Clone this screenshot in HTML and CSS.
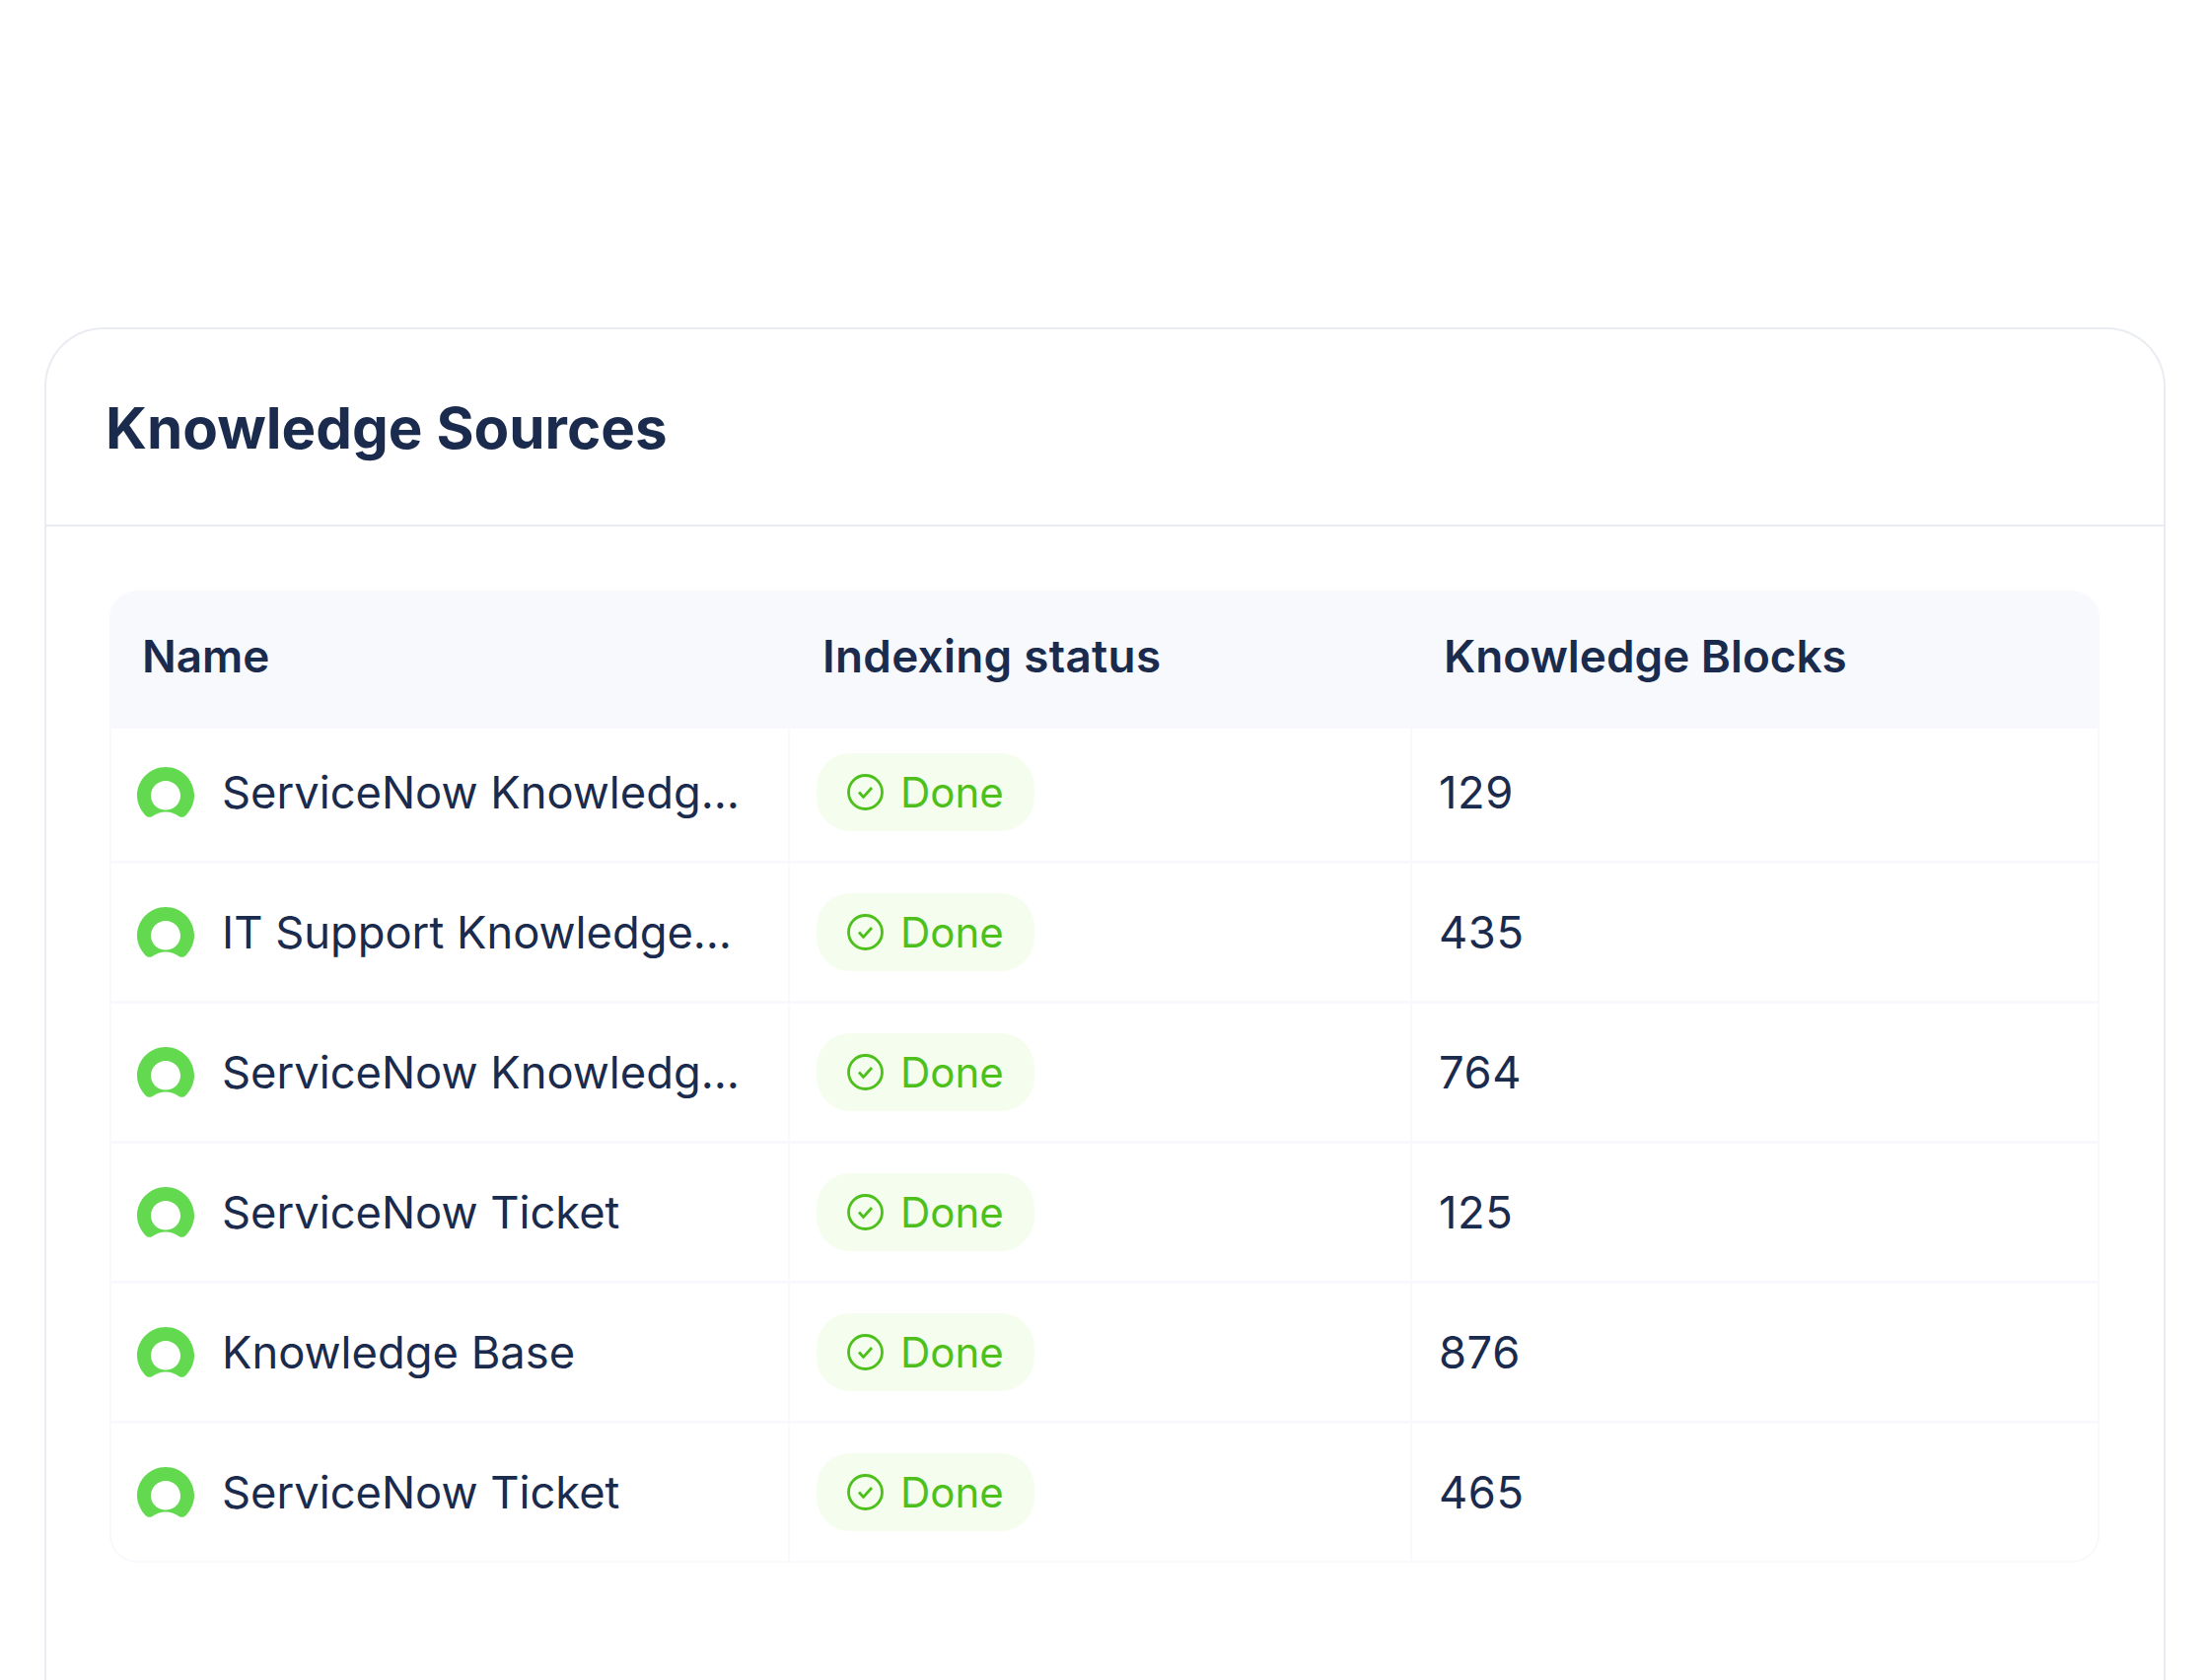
FILE: index.html
```html
<!DOCTYPE html>
<html lang="en">
<head>
<meta charset="utf-8">
<title>Knowledge Sources</title>
<link rel="stylesheet" href="styles.css">
</head>
<body>
<svg class="defs" width="0" height="0" aria-hidden="true">
  <symbol id="logo" viewBox="0 0 58 52">
    <path fill="#62d94f" fill-rule="evenodd" d="M29 0C13 0 0 13 0 29C0 36 3 43 8 48.5C10 51 13 51.5 15.5 50C19 47.5 24 45.5 29 45.5C34 45.5 39 47.5 42.5 50C45 51.5 48 51 50 48.5C55 43 58 36 58 29C58 13 45 0 29 0ZM29 14C37 14 44 20.5 44 29C44 37.5 37 43.5 29 43.5C21 43.5 14 37.5 14 29C14 20.5 21 14 29 14Z"/>
  </symbol>
  <symbol id="check" viewBox="0 0 37 37">
    <circle cx="18.5" cy="18.5" r="17" fill="none" stroke="#4dc01c" stroke-width="2.8"/>
    <path d="M12 18.5L16.5 23.5L25 14" fill="none" stroke="#4dc01c" stroke-width="2.8"/>
  </symbol>
</svg>
<main class="card">
  <h1 class="title">Knowledge Sources</h1>
  <div class="content">
    <div class="table">
      <div class="row head">
        <div class="cell">Name</div>
        <div class="cell">Indexing status</div>
        <div class="cell">Knowledge Blocks</div>
      </div>
      <div class="row">
        <div class="cell name"><svg class="logo"><use href="#logo"/></svg><span class="label">ServiceNow Knowledge Base</span></div>
        <div class="cell status"><span class="pill"><svg class="check"><use href="#check"/></svg>Done</span></div>
        <div class="cell num">129</div>
      </div>
      <div class="row">
        <div class="cell name"><svg class="logo"><use href="#logo"/></svg><span class="label">IT Support Knowledge Base</span></div>
        <div class="cell status"><span class="pill"><svg class="check"><use href="#check"/></svg>Done</span></div>
        <div class="cell num">435</div>
      </div>
      <div class="row">
        <div class="cell name"><svg class="logo"><use href="#logo"/></svg><span class="label">ServiceNow Knowledge Base</span></div>
        <div class="cell status"><span class="pill"><svg class="check"><use href="#check"/></svg>Done</span></div>
        <div class="cell num">764</div>
      </div>
      <div class="row">
        <div class="cell name"><svg class="logo"><use href="#logo"/></svg><span class="label">ServiceNow Ticket</span></div>
        <div class="cell status"><span class="pill"><svg class="check"><use href="#check"/></svg>Done</span></div>
        <div class="cell num">125</div>
      </div>
      <div class="row">
        <div class="cell name"><svg class="logo"><use href="#logo"/></svg><span class="label">Knowledge Base</span></div>
        <div class="cell status"><span class="pill"><svg class="check"><use href="#check"/></svg>Done</span></div>
        <div class="cell num">876</div>
      </div>
      <div class="row">
        <div class="cell name"><svg class="logo"><use href="#logo"/></svg><span class="label">ServiceNow Ticket</span></div>
        <div class="cell status"><span class="pill"><svg class="check"><use href="#check"/></svg>Done</span></div>
        <div class="cell num">465</div>
      </div>
    </div>
  </div>
</main>
</body>
</html>
```
FILE: styles.css
```css
html, body { margin: 0; padding: 0; background: #fff; }
body {
  height: 1704px;
  overflow: hidden;
  font-family: Inter, "Liberation Sans", sans-serif;
  color: #1a2b4d;
  padding: 332px 44px 0 45px;
  box-sizing: border-box;
}
.defs { display: block; height: 0; }
.card {
  border: 2px solid #e9edf2;
  border-bottom: 0;
  border-radius: 60px 60px 0 0;
  height: 1372px;
  box-sizing: border-box;
  background: #fff;
}
.title {
  margin: 0;
  height: 200px;
  box-sizing: border-box;
  padding: 1px 0 0 60px;
  display: flex;
  align-items: center;
  font-size: 58.3px;
  font-weight: 700;
  border-bottom: 2px solid #e9edf2;
}
.content { padding: 65px 65px 0 64px; }
.table {
  border-radius: 28px;
  border: 2px solid #f8f8fd;
  border-top: 0;
  overflow: hidden;
}
.row {
  display: grid;
  grid-template-columns: 688px 631px 1fr;
  height: 142px;
  box-sizing: border-box;
  border-bottom: 3px solid #f9f9fd;
}
.row:last-child { border-bottom: 0; height: 139px; }
.row.head {
  position: relative;
  z-index: 1;
  height: 140px;
  margin-bottom: -5px;
  background: #f7f9fd;
  border-bottom: 0;
}
.row.head .cell {
  padding: 0 0 7px 31px;
  border: 0;
  font-size: 45.8px;
  font-weight: 600;
}
.row.head .cell:nth-child(2) { padding-left: 33px; letter-spacing: 0.3px; }
.row.head .cell:nth-child(3) { padding-left: 32px; }
.cell {
  display: flex;
  align-items: center;
  min-width: 0;
  font-size: 45.3px;
  border-right: 2px solid #f8f8fd;
}
.cell:last-child { border-right: 0; }
.name { padding-left: 26px; gap: 28px; }
.logo { width: 58px; height: 52px; flex: none; }
.label {
  width: 526px;
  white-space: nowrap;
  overflow: hidden;
  text-overflow: ellipsis;
}
.status { padding-left: 27px; }
.pill {
  display: flex;
  align-items: center;
  gap: 17px;
  height: 79px;
  width: 221px;
  box-sizing: border-box;
  padding-left: 31px;
  border-radius: 34px;
  background: #f5feee;
  color: #4dc01c;
  font-size: 42px;
}
.check { width: 37px; height: 37px; flex: none; }
.num { padding-left: 27px; letter-spacing: 0.6px; }
```
